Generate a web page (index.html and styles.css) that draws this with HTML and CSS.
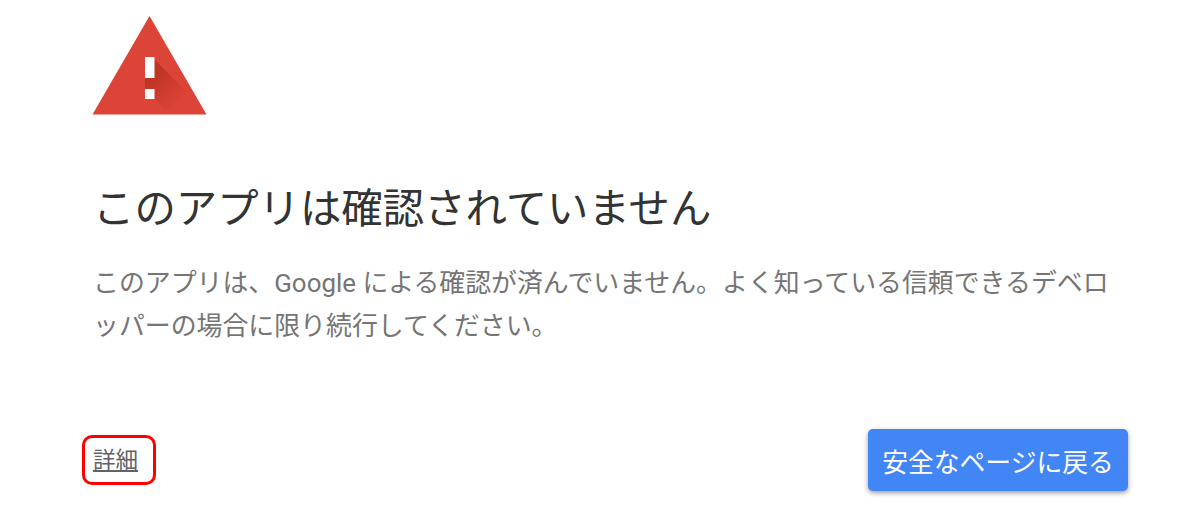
FILE: index.html
```html
<!DOCTYPE html>
<html lang="ja">
<head>
<meta charset="utf-8">
<title>このアプリは確認されていません</title>
<link rel="stylesheet" href="styles.css">
</head>
<body>
<main class="page">
  <svg class="warn" viewBox="0 0 116 100" width="116" height="100" aria-hidden="true">
    <defs>
      <linearGradient id="shade" gradientUnits="userSpaceOnUse" x1="55" y1="66" x2="82" y2="93">
        <stop offset="0" stop-color="#a52714" stop-opacity=".55"/>
        <stop offset="1" stop-color="#a52714" stop-opacity="0"/>
      </linearGradient>
    </defs>
    <path d="M57.500 1 L114.500 99.500 L0.500 99.500 Z" fill="#dc4437"/>
    <path d="M62 44 L100 82 L110 99.500 L78 99.500 L53 74 L53 63 Z" fill="url(#shade)"/>
    <rect x="53" y="42" width="9.500" height="21" fill="#fff"/>
    <rect x="53" y="74" width="9.500" height="10" fill="#fff"/>
  </svg>
  <h1 class="title">このアプリは確認されていません</h1>
  <p class="desc">このアプリは、Google による確認が済んでいません。よく知っている信頼できるデベロッパーの場合に限り続行してください。</p>
  <div class="actions">
    <a class="details" href="#">詳細</a>
    <button class="back" type="button">安全なページに戻る</button>
  </div>
</main>
</body>
</html>
```
FILE: styles.css
```css
html, body {
  margin: 0;
  height: 100%;
  background: #fff;
}
body {
  font-family: Roboto, "Noto Sans CJK JP", sans-serif;
  overflow: hidden;
}
.page {
  display: flex;
  flex-direction: column;
  align-items: flex-start;
  height: 516px;
  box-sizing: border-box;
  padding: 15px 72px 0 93px;
}
.warn {
  display: block;
  margin-left: -1px;
}
.title {
  margin: 64px 0 0;
  font-size: 41.400px;
  line-height: 60px;
  font-weight: 400;
  color: #333;
}
.desc {
  margin: 23px 0 0;
  max-width: 1030px;
  font-size: 25.900px;
  line-height: 42.500px;
  color: #757575;
}
.actions {
  display: flex;
  justify-content: space-between;
  align-items: center;
  align-self: stretch;
  margin-top: 82px;
}
.details {
  box-sizing: border-box;
  width: 74px;
  height: 50px;
  margin-left: -11px;
  padding-left: 8px;
  font-size: 22.500px;
  line-height: 44px;
  color: #5f6368;
  text-decoration: underline;
  border: 3px solid #f00;
  border-radius: 10px;
}
.back {
  width: 260px;
  height: 62px;
  padding: 0;
  border: 0;
  border-radius: 5px;
  background: #4285f4;
  color: #fff;
  font: inherit;
  font-size: 25.800px;
  box-shadow: 0 2px 5px rgba(0,0,0,.4);
}
```
